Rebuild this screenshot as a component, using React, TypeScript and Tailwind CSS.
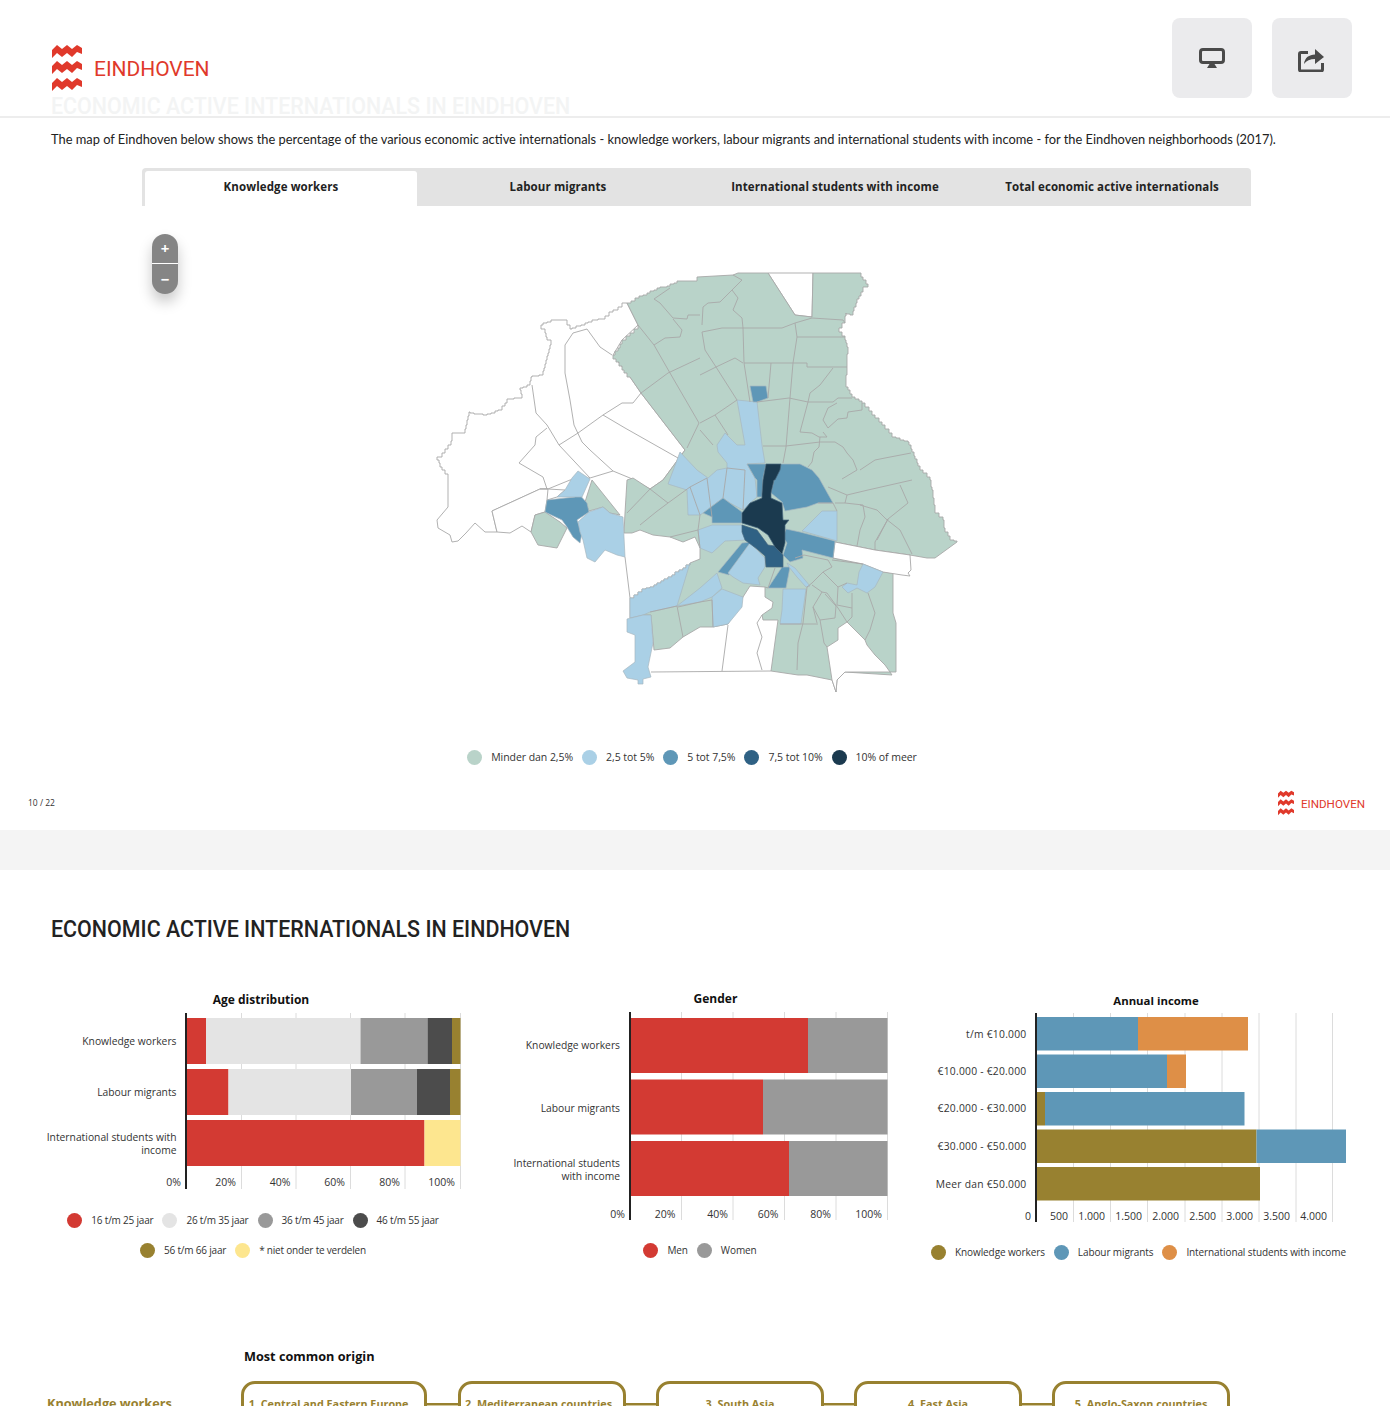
const GREEN = "#b9d3c9";
const LIGHT = "#aad0e6";
const MID = "#5e97b7";
const DEEP = "#2f6184";
const DARK = "#1b3a4f";

// turns a rough outline into the staircase edge the map has on its outer border
function stepped(s: string, size = 4) {
  const pts = s.split(" ").map((p) => p.split(",").map(Number));
  const out: string[] = [`${pts[0][0]},${pts[0][1]}`];
  for (let i = 1; i < pts.length; i++) {
    const [ax, ay] = pts[i - 1];
    const [bx, by] = pts[i];
    const dx = bx - ax;
    const dy = by - ay;
    const n = Math.max(1, Math.round(Math.max(Math.abs(dx), Math.abs(dy)) / size));
    for (let k = 1; k <= n; k++) {
      const x = Math.round(ax + (dx * k) / n);
      out.push(`${x},${Math.round(ay + (dy * (k - 1)) / n)}`);
      out.push(`${x},${Math.round(ay + (dy * k) / n)}`);
    }
  }
  return out.join(" ");
}

const swEdge = stepped("630,598 642,589 650,587 668,577 690,563");

// map outlines, in page coordinates
const whiteShapes = [
  stepped("627,303 622,307 613,312 605,319 595,320 585,325 572,329 567,320 555,320 543,325 541,329 545,333 547,340 551,345 547,360 543,375 532,377 530,385 520,390 522,398 510,399 502,410 487,415 470,412 465,433 453,433 451,445 442,457 437,460 442,470 448,478") +
    " 448,507 437,520 438,528 450,535 452,542 458,541 466,533 475,523 485,532 497,532 492,511 540,489 548,489 570,480 590,478 613,471 630,478 650,489 663,480 685,450 641,393 630,377 613,355 622,340 638,325",
  "497,532 510,533 522,526 531,532 535,515 545,512 547,500 557,497 565,490 548,489 540,489 492,511",
  "768,273 813,273 812,317 795,315",
];

const greenShapes = [
  stepped("613,355 622,340 638,325") +
    " " +
    stepped("627,303 635,298 647,293 657,288 667,286 677,281 692,281 697,277") +
    " 733,275 738,273 768,273 795,315 812,317 813,273 858,273 " +
    stepped("858,273 863,280 868,287 863,292 857,303 853,315 846,313 845,323 839,332 845,340 848,350 847,363 846,387 852,397 862,403 872,415 882,425 892,437 908,442 912,452 920,470 930,480 932,490 935,513 943,520 945,532 950,540 957,542") +
    " 935,558 927,558 910,555 875,550 835,542 833,558 863,564 883,572 893,573 893,613 896,623 896,672 890,672 892,675 845,672 837,680 836,692 832,680 807,675 798,675 771,671 778,620 763,620 762,615 772,608 773,602 765,597 765,587 750,586 743,597 728,624 713,627 700,627 683,637 670,648 654,650 651,615 643,615 630,618 " +
    swEdge +
    " 700,559 700,548 695,537 683,542 670,537 653,535 640,530 632,533 624,533 625,513 627,480 633,478 650,489 663,480 685,450 641,393 " +
    stepped("630,377 613,355"),
  "535,515 545,512 560,522 567,528 557,548 538,545 531,532",
  "592,480 620,515 610,513 603,507 589,511 585,502",
];

const whitePatches = [
  "827,647 838,640 838,628 847,622 865,640 867,645 875,655 885,665 890,672 845,672 837,680 836,692 832,680",
  "835,542 875,550 910,555 911,570 908,573 910,576 902,575 883,572 863,564 833,558",
];

const fills: [string, string][] = [
  // north and centre, light blue
  [LIGHT, "737,400 757,402 762,445 765,463 747,464 755,478 757,497 750,503 743,510 730,503 723,498 703,513 700,515 688,515 687,490 668,484 680,452 697,470 708,478 717,470 727,468 727,463 718,452 717,445 725,433 737,445 745,445"],
  [LIGHT, "698,530 712,525 742,525 747,540 725,541 712,553 700,548"],
  // west cluster
  [MID, "547,500 575,497 578,493 587,503 589,512 577,520 582,533 580,543 573,537 567,527 562,520 545,512"],
  [LIGHT, "578,522 589,512 603,507 610,513 623,517 625,557 617,555 605,550 595,562 587,558 583,540 580,532"],
  [LIGHT, "557,497 565,490 572,478 578,471 590,479 582,497 575,497"],
  // south west
  [LIGHT, swEdge + " 677,606 650,612 643,615 630,618"],
  [LIGHT, "627,619 643,615 651,615 653,643 648,667 651,677 643,679 643,684 638,684 638,680 627,678 623,671 635,662 635,635 627,632"],
  [LIGHT, "712,597 722,589 743,597 742,607 728,624 713,627"],
  [LIGHT, "700,588 717,573 722,588 712,597 700,602 677,606"],
  // mid blue around the centre
  [MID, "750,386 766,386 768,398 757,402 753,402"],
  [MID, "747,464 766,464 763,478 762,497 757,497 757,480 755,478"],
  [MID, "781,464 800,464 812,470 819,478 833,503 818,503 807,507 785,511 782,502 771,493 774,480"],
  [MID, "703,513 723,498 742,512 742,523 712,523 712,517"],
  [MID, "786,529 800,532 835,541 833,558 802,550 803,558 790,562 783,555 787,543 783,537"],
  [LIGHT, "802,531 822,511 837,511 837,541"],
  [MID, "718,572 742,543 751,542 729,575"],
  [LIGHT, "728,573 750,543 765,558 765,567 758,578 760,585 743,583 733,577"],
  [MID, "782,567 790,567 786,588 768,588"],
  [LIGHT, "787,563 795,568 810,586 806,587 797,577 789,567"],
  [LIGHT, "783,589 806,589 801,624 780,624 782,610"],
  [LIGHT, "863,564 883,572 875,587 867,593 857,588 848,593 842,587 847,583 857,585 859,572"],
  // the dark core
  [DEEP, "742,525 757,530 768,545 775,546 783,555 783,567 766,567 765,556 757,549 745,540 742,532"],
  [DARK, "766,464 781,464 780,470 775,480 774,480 771,493 771,498 782,503 783,520 789,520 785,525 785,543 782,554 775,547 768,535 758,528 742,523 742,513 750,503 762,498 762,494 763,480"],
];

const lines = [
  // white west
  "565,345 573,333 587,329",
  "565,345 565,373 570,400 574,425 582,442 590,450 613,471",
  "587,329 600,347 612,355",
  "532,385 536,413 547,425 559,445 590,478",
  "559,445 578,433 603,415 622,403 633,403 641,393",
  "603,415 625,428 678,458",
  "547,428 536,437 535,445 519,463 543,477 547,489",
  // north
  "670,288 654,299 660,303 673,318 687,319 688,315 700,315",
  "638,325 654,345 665,338 680,337 682,330 673,319",
  "654,345 670,373 699,423 687,448",
  "641,393 668,373 700,358",
  "700,375 716,367 735,358 743,363",
  "705,350 716,367 737,400",
  "702,332 705,350",
  "702,332 722,328 743,328 782,328 795,323",
  "743,328 744,363 750,402",
  "733,310 738,298 732,290 742,280 733,275",
  "733,310 742,318 743,328",
  "702,325 703,307 708,303 720,302 732,290",
  "795,323 797,337 793,363",
  "797,337 845,337",
  "795,323 812,318 843,320 845,323",
  "744,363 793,363 807,363 807,367 847,367",
  "771,363 768,398",
  "793,363 790,398 786,447 783,463",
  "757,402 789,398 808,402 833,402 838,398 852,398",
  "833,368 820,385 810,393 808,402 800,432 812,433 819,437 827,437 823,432",
  "837,403 828,408 823,420 828,428 838,419 847,418 848,412 862,410 862,403",
  "763,446 786,446 820,442 835,442 843,447 847,453 853,460 857,470 842,479",
  "820,437 819,447 814,452 812,462 808,467",
  "860,470 875,460 885,458 911,453",
  "700,423 715,415 737,400",
  "715,415 728,435",
  "700,430 713,445",
  // east
  "828,487 847,495 868,490 890,485 912,480",
  "847,495 845,503 835,503",
  "900,485 908,503 888,519 875,542 875,550",
  "845,503 863,505 865,517 860,530 857,546",
  "860,505 877,510 886,519 900,530 912,554",
  "888,519 877,540",
  "818,503 833,503 837,511",
  // centre west
  "627,513 650,489",
  "650,489 668,503 656,512 640,525",
  "668,503 690,487 700,515 698,530 700,548",
  "690,487 707,478 712,517",
  "723,498 727,468 745,470 743,510",
  "698,530 670,537",
  // south
  "795,558 804,555 828,560 832,567 823,572 812,583 807,587",
  "823,572 838,587 847,583",
  "832,560 863,564",
  "807,587 803,623 798,643 797,670",
  "812,585 822,592 813,607 817,623",
  "825,594 836,606 835,618 820,620 813,607",
  "820,620 824,643 827,647",
  "822,592 827,593 838,608 847,622",
  "838,587 837,605 852,608",
  "852,593 852,617 847,622",
  "868,593 875,613 870,630 865,640",
  "780,624 818,624",
  "775,568 768,588 765,587",
  "650,612 677,606 683,637",
  "678,607 700,602 712,600 713,627",
  "762,670 757,653 762,637 757,623 762,615",
  "728,625 722,671",
  "651,672 771,671",
  "625,557 630,598",
  "540,489 548,489 547,500",
];

function EindhovenMark({ className }: { className: string }) {
  return (
    <svg viewBox="0 0 30 46" className={className} fill="#e0392b">
      <path d="M0 5 L5 0 L10 4 L15 0 L20 4 L25 0 L30 3 V9 L25 7 L20 12 L15 8 L10 12 L5 8 L0 13 Z" />
      <path d="M0 21 L5 16 L10 20 L15 16 L20 20 L25 16 L30 19 V25 L25 23 L20 28 L15 24 L10 28 L5 24 L0 29 Z" />
      <path d="M0 38 L5 33 L10 37 L15 33 L20 37 L25 33 L30 36 V42 L25 40 L20 45 L15 41 L10 45 L5 41 L0 46 Z" />
    </svg>
  );
}

function DistrictMap() {
  return (
    <svg viewBox="430 262 540 440" className="block w-[540px] h-[440px]" strokeLinejoin="round">
      {whiteShapes.map((p, i) => (
        <polygon key={i} points={p} fill="#fff" stroke="#a8a8a8" strokeWidth="0.9" />
      ))}
      {greenShapes.map((p, i) => (
        <polygon key={i} points={p} fill={GREEN} stroke="#a8a8a8" strokeWidth="0.9" />
      ))}
      {whitePatches.map((p, i) => (
        <polygon key={i} points={p} fill="#fff" stroke="#a8a8a8" strokeWidth="0.9" />
      ))}
      {fills.map(([c, p], i) => (
        <polygon key={i} points={p} fill={c} stroke={c === DARK || c === DEEP ? "#4a6a80" : "#a8b8c0"} strokeWidth="0.7" />
      ))}
      {lines.map((p, i) => (
        <polyline key={i} points={p} fill="none" stroke="#a8a8a8" strokeWidth="0.9" />
      ))}
    </svg>
  );
}

type Seg = [number, number, string];
type Row = { y: number; h: number; segs: Seg[] };

type ChartProps = {
  x0: number;
  w: number;
  h: number;
  title: string;
  titleX: number;
  titleY: number;
  titleClass?: string;
  labelClass?: string;
  axisX: number;
  axisTop: number;
  axisBottom: number;
  grid: number[];
  rows: Row[];
  labels: [string, number][];
  labelX: number;
  ticks: [string, number][];
  tickY: number;
};

function Chart(c: ChartProps) {
  return (
    <svg viewBox={`${c.x0} 985 ${c.w} ${c.h}`} className="block" width={c.w} height={c.h}>
      {c.grid.map((x) => (
        <line key={x} x1={x} x2={x} y1={c.axisTop} y2={c.axisBottom} stroke="#dcdcdc" strokeWidth="1" />
      ))}
      {c.rows.map((r) =>
        r.segs.map(([a, b, col]) => (
          <rect key={`${r.y}-${a}`} x={a} y={r.y} width={b - a} height={r.h} fill={col} />
        )),
      )}
      <line x1={c.axisX} x2={c.axisX} y1={c.axisTop} y2={c.axisBottom} stroke="#222" strokeWidth="2" />
      <text x={c.titleX} y={c.titleY} textAnchor="middle" className={c.titleClass ?? "text-[12px] font-bold fill-[#111]"}>
        {c.title}
      </text>
      {c.labels.map(([t, y]) => (
        <text key={t} x={c.labelX} y={y} textAnchor="end" className={c.labelClass ?? "text-[10.3px] fill-[#333]"}>
          {t}
        </text>
      ))}
      {c.ticks.map(([t, x]) => (
        <text key={t} x={x} y={c.tickY} textAnchor="end" className="text-[10.5px] fill-[#333]">
          {t}
        </text>
      ))}
    </svg>
  );
}

function Legend({ items, textClass }: { items: [string, string][]; textClass: string }) {
  return (
    <div className="flex justify-center gap-x-[9px]">
      {items.map(([dot, label]) => (
        <div key={label} className="flex items-center gap-[9px] h-[15px]">
          <span className={`w-[15px] h-[15px] rounded-full ${dot}`} />
          <span className={textClass}>{label}</span>
        </div>
      ))}
    </div>
  );
}

const RED = "#d33a33";
const PALE = "#e4e4e4";
const GREY = "#999999";
const COAL = "#4c4c4c";
const OLIVE = "#988130";
const YELLOW = "#fde68f";
const BLUE = "#5e97b7";
const ORANGE = "#de8f47";

const tabs = ["Knowledge workers", "Labour migrants", "International students with income", "Total economic active internationals"];

const mapLegend: [string, string][] = [
  ["bg-[#b9d3c9]", "Minder dan 2,5%"],
  ["bg-[#aad0e6]", "2,5 tot 5%"],
  ["bg-[#5e97b7]", "5 tot 7,5%"],
  ["bg-[#2f6184]", "7,5 tot 10%"],
  ["bg-[#1b3a4f]", "10% of meer"],
];

const origins = [
  { name: "1. Central and Eastern Europe", box: "w-[186px] pr-[11px]" },
  { name: "2. Mediterranean countries", box: "w-[168px] pr-[7px]" },
  { name: "3. South Asia", box: "w-[168px]" },
  { name: "4. East Asia", box: "w-[168px]" },
  { name: "5. Anglo-Saxon countries", box: "w-[178px]" },
];

export default function App() {
  return (
    <div className="h-[1406px] w-[1390px] overflow-hidden bg-white font-['Open_Sans',sans-serif]">
      <section className="h-[830px] flex flex-col">
        <header className="h-[118px] border-b-2 border-[#ededed] flex justify-between pl-[51px] pr-[38px]">
          <div className="pt-[45px]">
            <div className="flex items-start">
              <EindhovenMark className="w-[30px] h-[46px] ml-px" />
              <span className="ml-3 mt-[11px] text-[21px] leading-[26px] text-[#e0392b] font-['Roboto',sans-serif] tracking-[-0.05px]">
                EINDHOVEN
              </span>
            </div>
            <h1 className="mt-[3px] text-[24px] leading-[24px] text-[#f3f4f4] font-medium font-['Roboto',sans-serif] whitespace-nowrap origin-left scale-x-[0.893]">
              ECONOMIC ACTIVE INTERNATIONALS IN EINDHOVEN
            </h1>
          </div>
          <div className="flex gap-5 pt-[18px]">
            <button className="w-20 h-20 rounded-lg bg-[#ebebed] flex items-center justify-center">
              <svg viewBox="0 0 26 20" className="w-[26px] h-[20px] -mt-[1px]">
                <rect x="1.5" y="1.5" width="23" height="13" rx="2.5" fill="none" stroke="#4a4a4a" strokeWidth="3" />
                <path d="M8 20 H18 L15.5 16 H10.5 Z" fill="#4a4a4a" />
              </svg>
            </button>
            <button className="w-20 h-20 rounded-lg bg-[#ebebed] flex items-center justify-center">
              <svg viewBox="0 0 26 26" className="w-[26px] h-[26px] mt-[2px] mr-[2px]">
                <path d="M10 6.5 H3 Q1.5 6.5 1.5 8 V23.5 Q1.5 25 3 25 H23 Q24.5 25 24.5 23.5 V17" fill="none" stroke="#4a4a4a" strokeWidth="3" />
                <path d="M6 18 C7 11 11 9 17 8.5 V3 L26 11 L17 18 V13 C12 13 8.5 14.5 6 18 Z" fill="#4a4a4a" />
              </svg>
            </button>
          </div>
        </header>

        <p className="mt-[11px] ml-[51px] text-[12.85px] leading-[20px] text-[#222] font-['Lato',sans-serif] whitespace-nowrap">
          The map of Eindhoven below shows the percentage of the various economic active internationals - knowledge workers, labour migrants and international students with income - for the Eindhoven neighborhoods (2017).
        </p>

        <div className="mt-[19px] ml-[142px] w-[1109px] h-[38px] bg-[#e3e3e3] rounded-t pl-[3px] pt-[3px] flex">
          {tabs.map((t, i) => (
            <div
              key={t}
              className={
                i === 0
                  ? "w-[272px] mr-[2.5px] h-[35px] pb-[3px] bg-white rounded-t-[3px] flex items-center justify-center text-[11.5px] tracking-[0.1px] font-bold text-[#222] whitespace-nowrap"
                  : "w-[277px] h-[35px] pb-[3px] flex items-center justify-center text-[11.5px] tracking-[0.1px] font-bold text-[#222] whitespace-nowrap"
              }
            >
              {t}
            </div>
          ))}
        </div>

        <div className="relative ml-[142px] w-[1109px] pl-[288px] pt-[56px]">
          <div className="absolute left-[10px] top-[28px] w-[26px] h-[60px] rounded-full bg-[#858585] shadow-[0_8px_14px_rgba(0,0,0,0.22)] flex flex-col text-white">
            <div className="h-[30px] flex items-center justify-center border-b border-white text-[15px] font-bold leading-none">+</div>
            <div className="h-[30px] flex items-center justify-center text-[15px] font-bold leading-none">−</div>
          </div>
          <DistrictMap />
        </div>

        <div className="mt-[48px] pr-[6px]">
          <Legend items={mapLegend} textClass="text-[10.5px] text-[#333] tracking-[-0.05px] whitespace-nowrap" />
        </div>

        <div className="mt-[25px] flex items-start justify-between pl-[28px] pr-[25px]">
          <span className="mt-[6px] text-[8.5px] leading-[14px] text-[#333]">10 / 22</span>
          <div className="flex items-center gap-[7px]">
            <EindhovenMark className="w-[16px] h-[26px]" />
            <span className="text-[11.6px] text-[#e0392b] font-['Roboto',sans-serif] mt-[3px]">EINDHOVEN</span>
          </div>
        </div>
      </section>

      <div className="h-10 bg-[#f4f4f4]" />

      <section>
        <h2 className="ml-[51px] pt-[44px] pb-[41px] text-[24px] leading-[30px] font-medium text-[#222] font-['Roboto',sans-serif] whitespace-nowrap origin-left scale-x-[0.893]">
          ECONOMIC ACTIVE INTERNATIONALS IN EINDHOVEN
        </h2>

        <div className="flex h-[280px]">
          <div className="w-[480px]">
            <Chart
              x0={0}
              w={480}
              h={205}
              title="Age distribution"
              titleX={261}
              titleY={1004}
              axisX={186}
              axisTop={1013}
              axisBottom={1189}
              grid={[241.5, 296, 350.5, 405, 460.5]}
              rows={[
                { y: 1018, h: 46, segs: [[187, 206, RED], [206, 360.5, PALE], [360.5, 427.5, GREY], [427.5, 452, COAL], [452, 460.5, OLIVE]] },
                { y: 1069, h: 46, segs: [[187, 228.5, RED], [228.5, 351, PALE], [351, 417, GREY], [417, 450, COAL], [450, 460.5, OLIVE]] },
                { y: 1120, h: 46, segs: [[187, 424.5, RED], [424.5, 460.5, YELLOW]] },
              ]}
              labels={[
                ["Knowledge workers", 1045],
                ["Labour migrants", 1096],
                ["International students with", 1141],
                ["income", 1154],
              ]}
              labelX={176.5}
              ticks={[["0%", 181], ["20%", 236], ["40%", 290.5], ["60%", 345], ["80%", 400], ["100%", 455]]}
              tickY={1186}
            />
            <div className="mt-[23px] pl-[26px] flex flex-col gap-y-[15px]">
              <Legend textClass="text-[10px] text-[#333] tracking-[-0.2px] whitespace-nowrap" items={[["bg-[#d33a33]", "16 t/m 25 jaar"], ["bg-[#e4e4e4]", "26 t/m 35 jaar"], ["bg-[#999999]", "36 t/m 45 jaar"], ["bg-[#4c4c4c]", "46 t/m 55 jaar"]]} />
              <Legend textClass="text-[10px] text-[#333] tracking-[-0.2px] whitespace-nowrap" items={[["bg-[#988130]", "56 t/m 66 jaar"], ["bg-[#fde68f]", "* niet onder te verdelen"]]} />
            </div>
          </div>

          <div className="w-[430px]">
            <Chart
              x0={480}
              w={430}
              h={240}
              title="Gender"
              titleX={715.5}
              titleY={1003}
              axisX={630}
              axisTop={1012}
              axisBottom={1220}
              grid={[681.5, 733, 784.5, 836, 887.5]}
              rows={[
                { y: 1018, h: 55, segs: [[631, 808, RED], [808, 887.5, GREY]] },
                { y: 1079.5, h: 55, segs: [[631, 763, RED], [763, 887.5, GREY]] },
                { y: 1141, h: 55, segs: [[631, 789, RED], [789, 887.5, GREY]] },
              ]}
              labels={[
                ["Knowledge workers", 1049],
                ["Labour migrants", 1111.5],
                ["International students", 1166.5],
                ["with income", 1179.5],
              ]}
              labelX={620}
              ticks={[["0%", 625], ["20%", 675.5], ["40%", 728], ["60%", 778.5], ["80%", 831], ["100%", 882]]}
              tickY={1217.5}
            />
            <div className="mt-[18px] pl-[10px]">
              <Legend textClass="text-[10px] text-[#333] tracking-[-0.1px] whitespace-nowrap" items={[["bg-[#d33a33]", "Men"], ["bg-[#999999]", "Women"]]} />
            </div>
          </div>

          <div className="w-[480px]">
            <Chart
              x0={910}
              w={480}
              h={240}
              title="Annual income"
              titleX={1156}
              titleY={1005}
              titleClass="text-[11.4px] font-bold fill-[#111]"
              labelClass="text-[10.3px] tracking-[0.25px] fill-[#333]"
              axisX={1036}
              axisTop={1013}
              axisBottom={1222}
              grid={[1073.5, 1110.5, 1147.5, 1185, 1222, 1259, 1296, 1332.5]}
              rows={[
                { y: 1017, h: 33.5, segs: [[1037, 1138, BLUE], [1138, 1248, ORANGE]] },
                { y: 1054.5, h: 33.5, segs: [[1037, 1167, BLUE], [1167, 1186, ORANGE]] },
                { y: 1092, h: 33.5, segs: [[1037, 1045, OLIVE], [1045, 1244.5, BLUE]] },
                { y: 1129.5, h: 33.5, segs: [[1037, 1256.5, OLIVE], [1256.5, 1346, BLUE]] },
                { y: 1167, h: 33.5, segs: [[1037, 1260, OLIVE]] },
              ]}
              labels={[
                ["t/m €10.000", 1037.5],
                ["€10.000 - €20.000", 1075],
                ["€20.000 - €30.000", 1112],
                ["€30.000 - €50.000", 1150],
                ["Meer dan €50.000", 1187.5],
              ]}
              labelX={1026.5}
              ticks={[["0", 1031], ["500", 1068], ["1.000", 1105], ["1.500", 1142], ["2.000", 1179], ["2.500", 1216], ["3.000", 1253], ["3.500", 1290], ["4.000", 1327]]}
              tickY={1219.5}
            />
            <div className="mt-[20px] pr-[23px]">
              <Legend textClass="text-[10px] text-[#333] tracking-[-0.1px] whitespace-nowrap" items={[["bg-[#988130]", "Knowledge workers"], ["bg-[#5e97b7]", "Labour migrants"], ["bg-[#de8f47]", "International students with income"]]} />
            </div>
          </div>
        </div>

        <h3 className="mt-[81px] ml-[244px] text-[12.7px] leading-[20px] font-bold text-[#111]">Most common origin</h3>

        <div className="mt-[15px] pl-[47px] flex items-start">
          <div className="w-[194px] pt-[14px] text-[12.7px] leading-[16px] font-bold text-[#988130] whitespace-nowrap">Knowledge workers</div>
          {origins.map((o, i) => (
            <div key={o.name} className="flex items-start">
              {i > 0 && <div className={i === 1 ? "w-[31px] mt-[22px] h-[6px] border-t-2 border-[#988130] bg-[#d2c69a]" : "w-[30px] mt-[22px] h-[6px] border-t-2 border-[#988130] bg-[#d2c69a]"} />}
              <div className={`${o.box} h-[60px] border-[3px] border-[#988130] rounded-[14px] pt-[13px] text-center text-[10.8px] leading-[14px] font-bold text-[#988130] whitespace-nowrap`}>
                {o.name}
              </div>
            </div>
          ))}
        </div>
      </section>
    </div>
  );
}
